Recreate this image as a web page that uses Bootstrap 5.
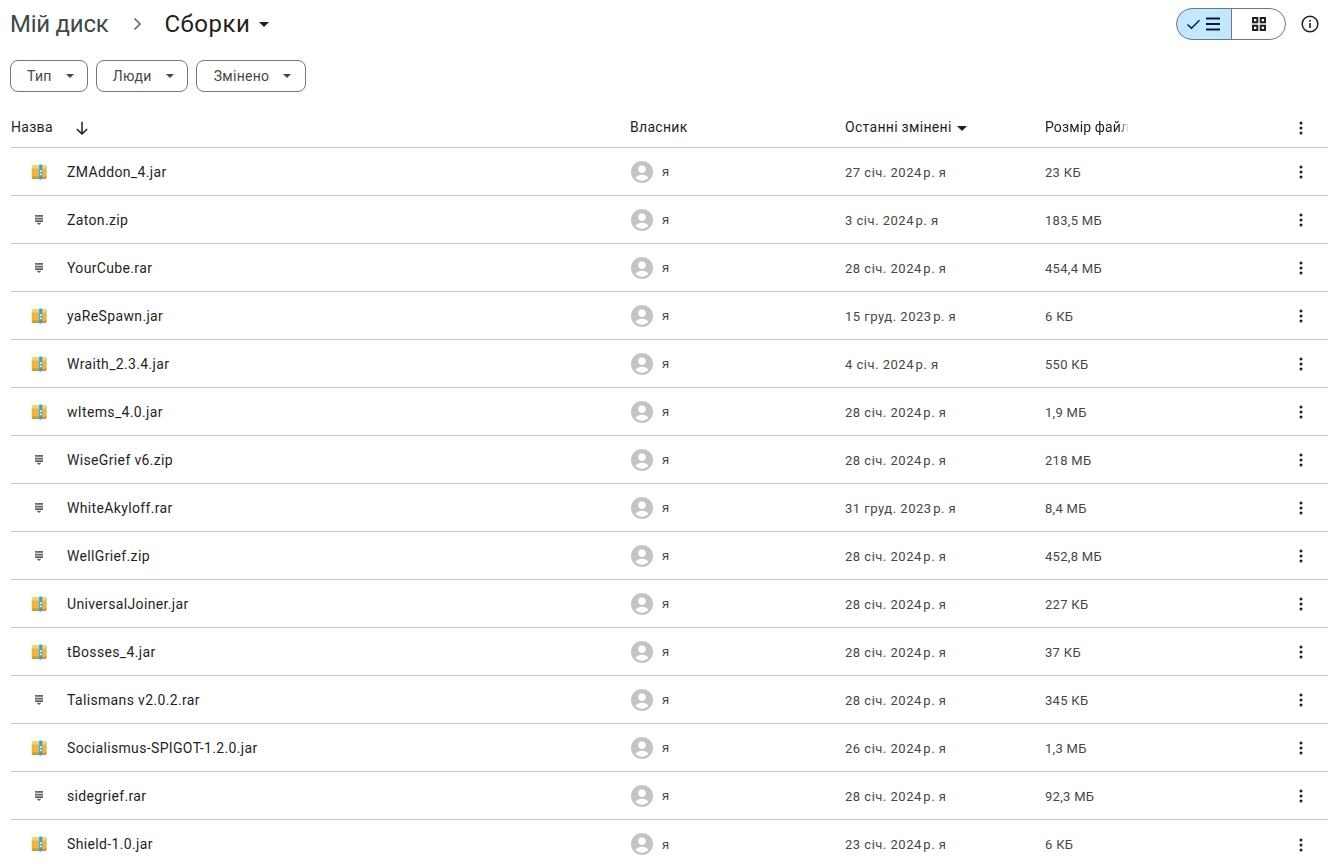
<!doctype html>
<html lang="uk"><head><meta charset="utf-8"><title>Сборки</title>
<link href="https://cdn.jsdelivr.net/npm/bootstrap@5.3.0/dist/css/bootstrap.min.css" rel="stylesheet">
<style>
html,body{height:864px;overflow:hidden}
body{font-family:Roboto,"Liberation Sans",sans-serif;background:#fff;color:#1f1f1f;font-size:14px}
.page-wrap{padding:0 5px 0 10px}
.top-row{height:48px}
.crumb-a{font-size:24px;color:#444746;letter-spacing:-.25px}
.crumb-b{font-size:24px;color:#1f1f1f;letter-spacing:.5px}
.crumb-sep{margin:0 22px 0 25px}
.crumb-caret{margin-left:9px}
.view-toggle{width:110px;height:32px;margin-right:15px}
.view-toggle .btn{border:1px solid #747775;padding:0;height:32px;display:flex;align-items:center;justify-content:center;border-radius:16px}
.view-toggle .view-on{background:#c2e7ff;flex:0 0 56px}
.view-toggle .view-off{background:#fff;flex:1 1 auto}
.info-ic{margin-right:9px}
.chips{height:60px;padding-top:12px;gap:8px}
.chip-btn{height:32px;border:1px solid #747775;border-radius:8px;font-size:14px;font-weight:400;letter-spacing:.3px;color:#444746;padding:0 13px 0 16px;display:flex;align-items:center;background:#fff}
.chip-btn svg{margin-left:14px}
.chips .chip-wide{padding:0 14px 0 17px}
.drive-table{table-layout:fixed;width:1317px;margin:0 0 0 1px;--bs-table-border-color:#c7c7c7;--bs-border-width:1px}
.drive-table th,.drive-table td{padding:0;vertical-align:middle;height:48px;box-shadow:none;border-bottom:1px solid #c7c7c7}
.drive-table tbody td{padding-top:2px}
.drive-table thead th{height:39px;font-weight:400;font-size:14px;letter-spacing:.3px;color:#1f1f1f}
.drive-table tbody tr:last-child td{border-bottom:0}
.name-cell{display:flex;align-items:center;font-weight:400;color:#1f1f1f;font-size:14px;letter-spacing:.35px}
.file-ic{width:56px;display:flex;justify-content:center}
.owner-cell{display:flex;align-items:center;gap:9px;font-size:13px;color:#444746;padding-left:1px}
.drive-table tbody td.muted-cell{font-size:13px;color:#444746;font-weight:400;letter-spacing:.5px;padding-top:3px}
.drive-table tbody td.size-cell{letter-spacing:.3px}
.fade-head{display:inline-block;vertical-align:middle;width:84px;letter-spacing:.12px;white-space:nowrap;overflow:hidden;-webkit-mask-image:linear-gradient(90deg,#000 88%,transparent)}
.kebab{text-align:center}
.drive-table tbody td.kebab{padding-top:1px}
.arrow-ic{margin-left:21px}
.sort-caret{margin-left:5px}
</style></head>
<body>
<svg width="0" height="0" class="d-none" aria-hidden="true"><defs>
<symbol id="jar" viewBox="0 0 16 16"><rect x=".7" y="1" width="15" height="14" rx="2.500" fill="#e6b64c"/><rect x=".7" y="1" width="15" height="3.500" rx="1.700" fill="#f4d27a"/><rect x=".7" y="12.500" width="15" height="2.500" rx="1.200" fill="#c9983a"/><rect x="8.200" y=".6" width="3" height="14.800" fill="#2aa3dc"/><rect x="8.900" y="6" width="1.600" height="2.200" fill="#e8f6ff"/><rect x="8.900" y="9.500" width="1.600" height="1.800" fill="#e8f6ff"/></symbol>
<symbol id="zip" viewBox="0 0 10 10"><path fill="#5f6368" d="M1 0h8v1.800H1zM1 2.700h8v1.800H1zM1 5.300h8v1.700H1zM2.500 7.700h5L5 10z"/></symbol>
<symbol id="ava" viewBox="0 0 24 24"><circle cx="12" cy="12" r="12" fill="#c4c4c4"/><circle cx="12" cy="9" r="4" fill="#fff"/><path fill="#fff" d="M4.800 18.400C6.600 15.900 9.200 15 12 15s5.400.9 7.200 3.400A9.600 9.600 0 0 1 12 21.600a9.600 9.600 0 0 1-7.200-3.200z"/></symbol>
<symbol id="kb" viewBox="0 0 4 14"><circle cx="2" cy="2" r="1.500" fill="#1f1f1f"/><circle cx="2" cy="7" r="1.500" fill="#1f1f1f"/><circle cx="2" cy="12" r="1.500" fill="#1f1f1f"/></symbol>
<symbol id="dn" viewBox="0 0 10 5"><path d="M0 0h10L5 5z" fill="currentColor"/></symbol>
</defs></svg>
<div class="page-wrap">
  <div class="top-row d-flex align-items-center justify-content-between">
    <div class="d-flex align-items-center">
      <span class="crumb-a">Мій диск</span>
      <svg class="crumb-sep" width="9" height="14" viewBox="0 0 9 14"><path d="M1.500 1.500 7 7l-5.500 5.500" fill="none" stroke="#5f6368" stroke-width="1.600"/></svg>
      <span class="crumb-b">Сборки</span>
      <svg class="crumb-caret" width="10" height="5" style="color:#1f1f1f"><use href="#dn"/></svg>
    </div>
    <div class="d-flex align-items-center">
      <div class="btn-group view-toggle" role="group">
        <button class="btn view-on" type="button"><svg width="36" height="14" viewBox="0 0 36 14"><path d="M1.500 7.500 5.500 11.300 13.500 3.200" fill="none" stroke="#001d35" stroke-width="1.400"/><path d="M20 1.500h14M20 7h14M20 12.500h14" stroke="#001d35" stroke-width="2"/></svg></button>
        <button class="btn view-off" type="button"><svg width="14" height="14" viewBox="0 0 14 14" fill="none" stroke="#1f1f1f" stroke-width="2"><rect x="1" y="1" width="4.300" height="4.300"/><rect x="8.700" y="1" width="4.300" height="4.300"/><rect x="1" y="8.700" width="4.300" height="4.300"/><rect x="8.700" y="8.700" width="4.300" height="4.300"/></svg></button>
      </div>
      <svg class="info-ic" width="18" height="18" viewBox="0 0 18 18"><circle cx="9" cy="9" r="7.800" fill="none" stroke="#1f1f1f" stroke-width="1.500"/><rect x="8.200" y="8" width="1.600" height="5" fill="#1f1f1f"/><rect x="8.200" y="5" width="1.600" height="1.700" fill="#1f1f1f"/></svg>
    </div>
  </div>
  <div class="chips d-flex align-items-start">
    <button class="btn chip-btn" type="button">Тип<svg width="8" height="4" style="color:#444746"><use href="#dn"/></svg></button>
    <button class="btn chip-btn" type="button">Люди<svg width="8" height="4" style="color:#444746"><use href="#dn"/></svg></button>
    <button class="btn chip-btn chip-wide" type="button">Змінено<svg width="8" height="4" style="color:#444746"><use href="#dn"/></svg></button>
  </div>
  <table class="table drive-table mb-0">
    <colgroup><col style="width:619px"><col style="width:215px"><col style="width:200px"><col><col style="width:54px"></colgroup>
    <thead><tr>
      <th>Назва<svg class="arrow-ic" width="16" height="16" viewBox="0 0 14 14"><path d="M7 1.500v10.500M2.500 7.800 7 12.300l4.500-4.500" fill="none" stroke="#1f1f1f" stroke-width="1.300"/></svg></th>
      <th>Власник</th>
      <th>Останні змінені<svg class="sort-caret" width="10" height="5" style="color:#1f1f1f"><use href="#dn"/></svg></th>
      <th><span class="fade-head">Розмір файлу</span></th>
      <th class="kebab"><svg width="4" height="14"><use href="#kb"/></svg></th>
    </tr></thead>
    <tbody>
      <tr><td><div class="name-cell"><span class="file-ic"><svg width="16" height="16"><use href="#jar"/></svg></span>ZMAddon_4.jar</div></td><td><div class="owner-cell"><svg width="22" height="22"><use href="#ava"/></svg>я</div></td><td class="muted-cell">27 січ. 2024&#8239;р. я</td><td class="muted-cell size-cell">23 КБ</td><td class="kebab"><svg width="4" height="14"><use href="#kb"/></svg></td></tr>
      <tr><td><div class="name-cell"><span class="file-ic"><svg width="10" height="10"><use href="#zip"/></svg></span>Zaton.zip</div></td><td><div class="owner-cell"><svg width="22" height="22"><use href="#ava"/></svg>я</div></td><td class="muted-cell">3 січ. 2024&#8239;р. я</td><td class="muted-cell size-cell">183,5 МБ</td><td class="kebab"><svg width="4" height="14"><use href="#kb"/></svg></td></tr>
      <tr><td><div class="name-cell"><span class="file-ic"><svg width="10" height="10"><use href="#zip"/></svg></span>YourCube.rar</div></td><td><div class="owner-cell"><svg width="22" height="22"><use href="#ava"/></svg>я</div></td><td class="muted-cell">28 січ. 2024&#8239;р. я</td><td class="muted-cell size-cell">454,4 МБ</td><td class="kebab"><svg width="4" height="14"><use href="#kb"/></svg></td></tr>
      <tr><td><div class="name-cell"><span class="file-ic"><svg width="16" height="16"><use href="#jar"/></svg></span>yaReSpawn.jar</div></td><td><div class="owner-cell"><svg width="22" height="22"><use href="#ava"/></svg>я</div></td><td class="muted-cell">15 груд. 2023&#8239;р. я</td><td class="muted-cell size-cell">6 КБ</td><td class="kebab"><svg width="4" height="14"><use href="#kb"/></svg></td></tr>
      <tr><td><div class="name-cell"><span class="file-ic"><svg width="16" height="16"><use href="#jar"/></svg></span>Wraith_2.3.4.jar</div></td><td><div class="owner-cell"><svg width="22" height="22"><use href="#ava"/></svg>я</div></td><td class="muted-cell">4 січ. 2024&#8239;р. я</td><td class="muted-cell size-cell">550 КБ</td><td class="kebab"><svg width="4" height="14"><use href="#kb"/></svg></td></tr>
      <tr><td><div class="name-cell"><span class="file-ic"><svg width="16" height="16"><use href="#jar"/></svg></span>wItems_4.0.jar</div></td><td><div class="owner-cell"><svg width="22" height="22"><use href="#ava"/></svg>я</div></td><td class="muted-cell">28 січ. 2024&#8239;р. я</td><td class="muted-cell size-cell">1,9 МБ</td><td class="kebab"><svg width="4" height="14"><use href="#kb"/></svg></td></tr>
      <tr><td><div class="name-cell"><span class="file-ic"><svg width="10" height="10"><use href="#zip"/></svg></span>WiseGrief v6.zip</div></td><td><div class="owner-cell"><svg width="22" height="22"><use href="#ava"/></svg>я</div></td><td class="muted-cell">28 січ. 2024&#8239;р. я</td><td class="muted-cell size-cell">218 МБ</td><td class="kebab"><svg width="4" height="14"><use href="#kb"/></svg></td></tr>
      <tr><td><div class="name-cell"><span class="file-ic"><svg width="10" height="10"><use href="#zip"/></svg></span>WhiteAkyloff.rar</div></td><td><div class="owner-cell"><svg width="22" height="22"><use href="#ava"/></svg>я</div></td><td class="muted-cell">31 груд. 2023&#8239;р. я</td><td class="muted-cell size-cell">8,4 МБ</td><td class="kebab"><svg width="4" height="14"><use href="#kb"/></svg></td></tr>
      <tr><td><div class="name-cell"><span class="file-ic"><svg width="10" height="10"><use href="#zip"/></svg></span>WellGrief.zip</div></td><td><div class="owner-cell"><svg width="22" height="22"><use href="#ava"/></svg>я</div></td><td class="muted-cell">28 січ. 2024&#8239;р. я</td><td class="muted-cell size-cell">452,8 МБ</td><td class="kebab"><svg width="4" height="14"><use href="#kb"/></svg></td></tr>
      <tr><td><div class="name-cell"><span class="file-ic"><svg width="16" height="16"><use href="#jar"/></svg></span>UniversalJoiner.jar</div></td><td><div class="owner-cell"><svg width="22" height="22"><use href="#ava"/></svg>я</div></td><td class="muted-cell">28 січ. 2024&#8239;р. я</td><td class="muted-cell size-cell">227 КБ</td><td class="kebab"><svg width="4" height="14"><use href="#kb"/></svg></td></tr>
      <tr><td><div class="name-cell"><span class="file-ic"><svg width="16" height="16"><use href="#jar"/></svg></span>tBosses_4.jar</div></td><td><div class="owner-cell"><svg width="22" height="22"><use href="#ava"/></svg>я</div></td><td class="muted-cell">28 січ. 2024&#8239;р. я</td><td class="muted-cell size-cell">37 КБ</td><td class="kebab"><svg width="4" height="14"><use href="#kb"/></svg></td></tr>
      <tr><td><div class="name-cell"><span class="file-ic"><svg width="10" height="10"><use href="#zip"/></svg></span>Talismans v2.0.2.rar</div></td><td><div class="owner-cell"><svg width="22" height="22"><use href="#ava"/></svg>я</div></td><td class="muted-cell">28 січ. 2024&#8239;р. я</td><td class="muted-cell size-cell">345 КБ</td><td class="kebab"><svg width="4" height="14"><use href="#kb"/></svg></td></tr>
      <tr><td><div class="name-cell"><span class="file-ic"><svg width="16" height="16"><use href="#jar"/></svg></span>Socialismus-SPIGOT-1.2.0.jar</div></td><td><div class="owner-cell"><svg width="22" height="22"><use href="#ava"/></svg>я</div></td><td class="muted-cell">26 січ. 2024&#8239;р. я</td><td class="muted-cell size-cell">1,3 МБ</td><td class="kebab"><svg width="4" height="14"><use href="#kb"/></svg></td></tr>
      <tr><td><div class="name-cell"><span class="file-ic"><svg width="10" height="10"><use href="#zip"/></svg></span>sidegrief.rar</div></td><td><div class="owner-cell"><svg width="22" height="22"><use href="#ava"/></svg>я</div></td><td class="muted-cell">28 січ. 2024&#8239;р. я</td><td class="muted-cell size-cell">92,3 МБ</td><td class="kebab"><svg width="4" height="14"><use href="#kb"/></svg></td></tr>
      <tr><td><div class="name-cell"><span class="file-ic"><svg width="16" height="16"><use href="#jar"/></svg></span>Shield-1.0.jar</div></td><td><div class="owner-cell"><svg width="22" height="22"><use href="#ava"/></svg>я</div></td><td class="muted-cell">23 січ. 2024&#8239;р. я</td><td class="muted-cell size-cell">6 КБ</td><td class="kebab"><svg width="4" height="14"><use href="#kb"/></svg></td></tr>
    </tbody>
  </table>
</div>
<script src="https://cdn.jsdelivr.net/npm/bootstrap@5.3.0/dist/js/bootstrap.bundle.min.js"></script>
</body></html>
